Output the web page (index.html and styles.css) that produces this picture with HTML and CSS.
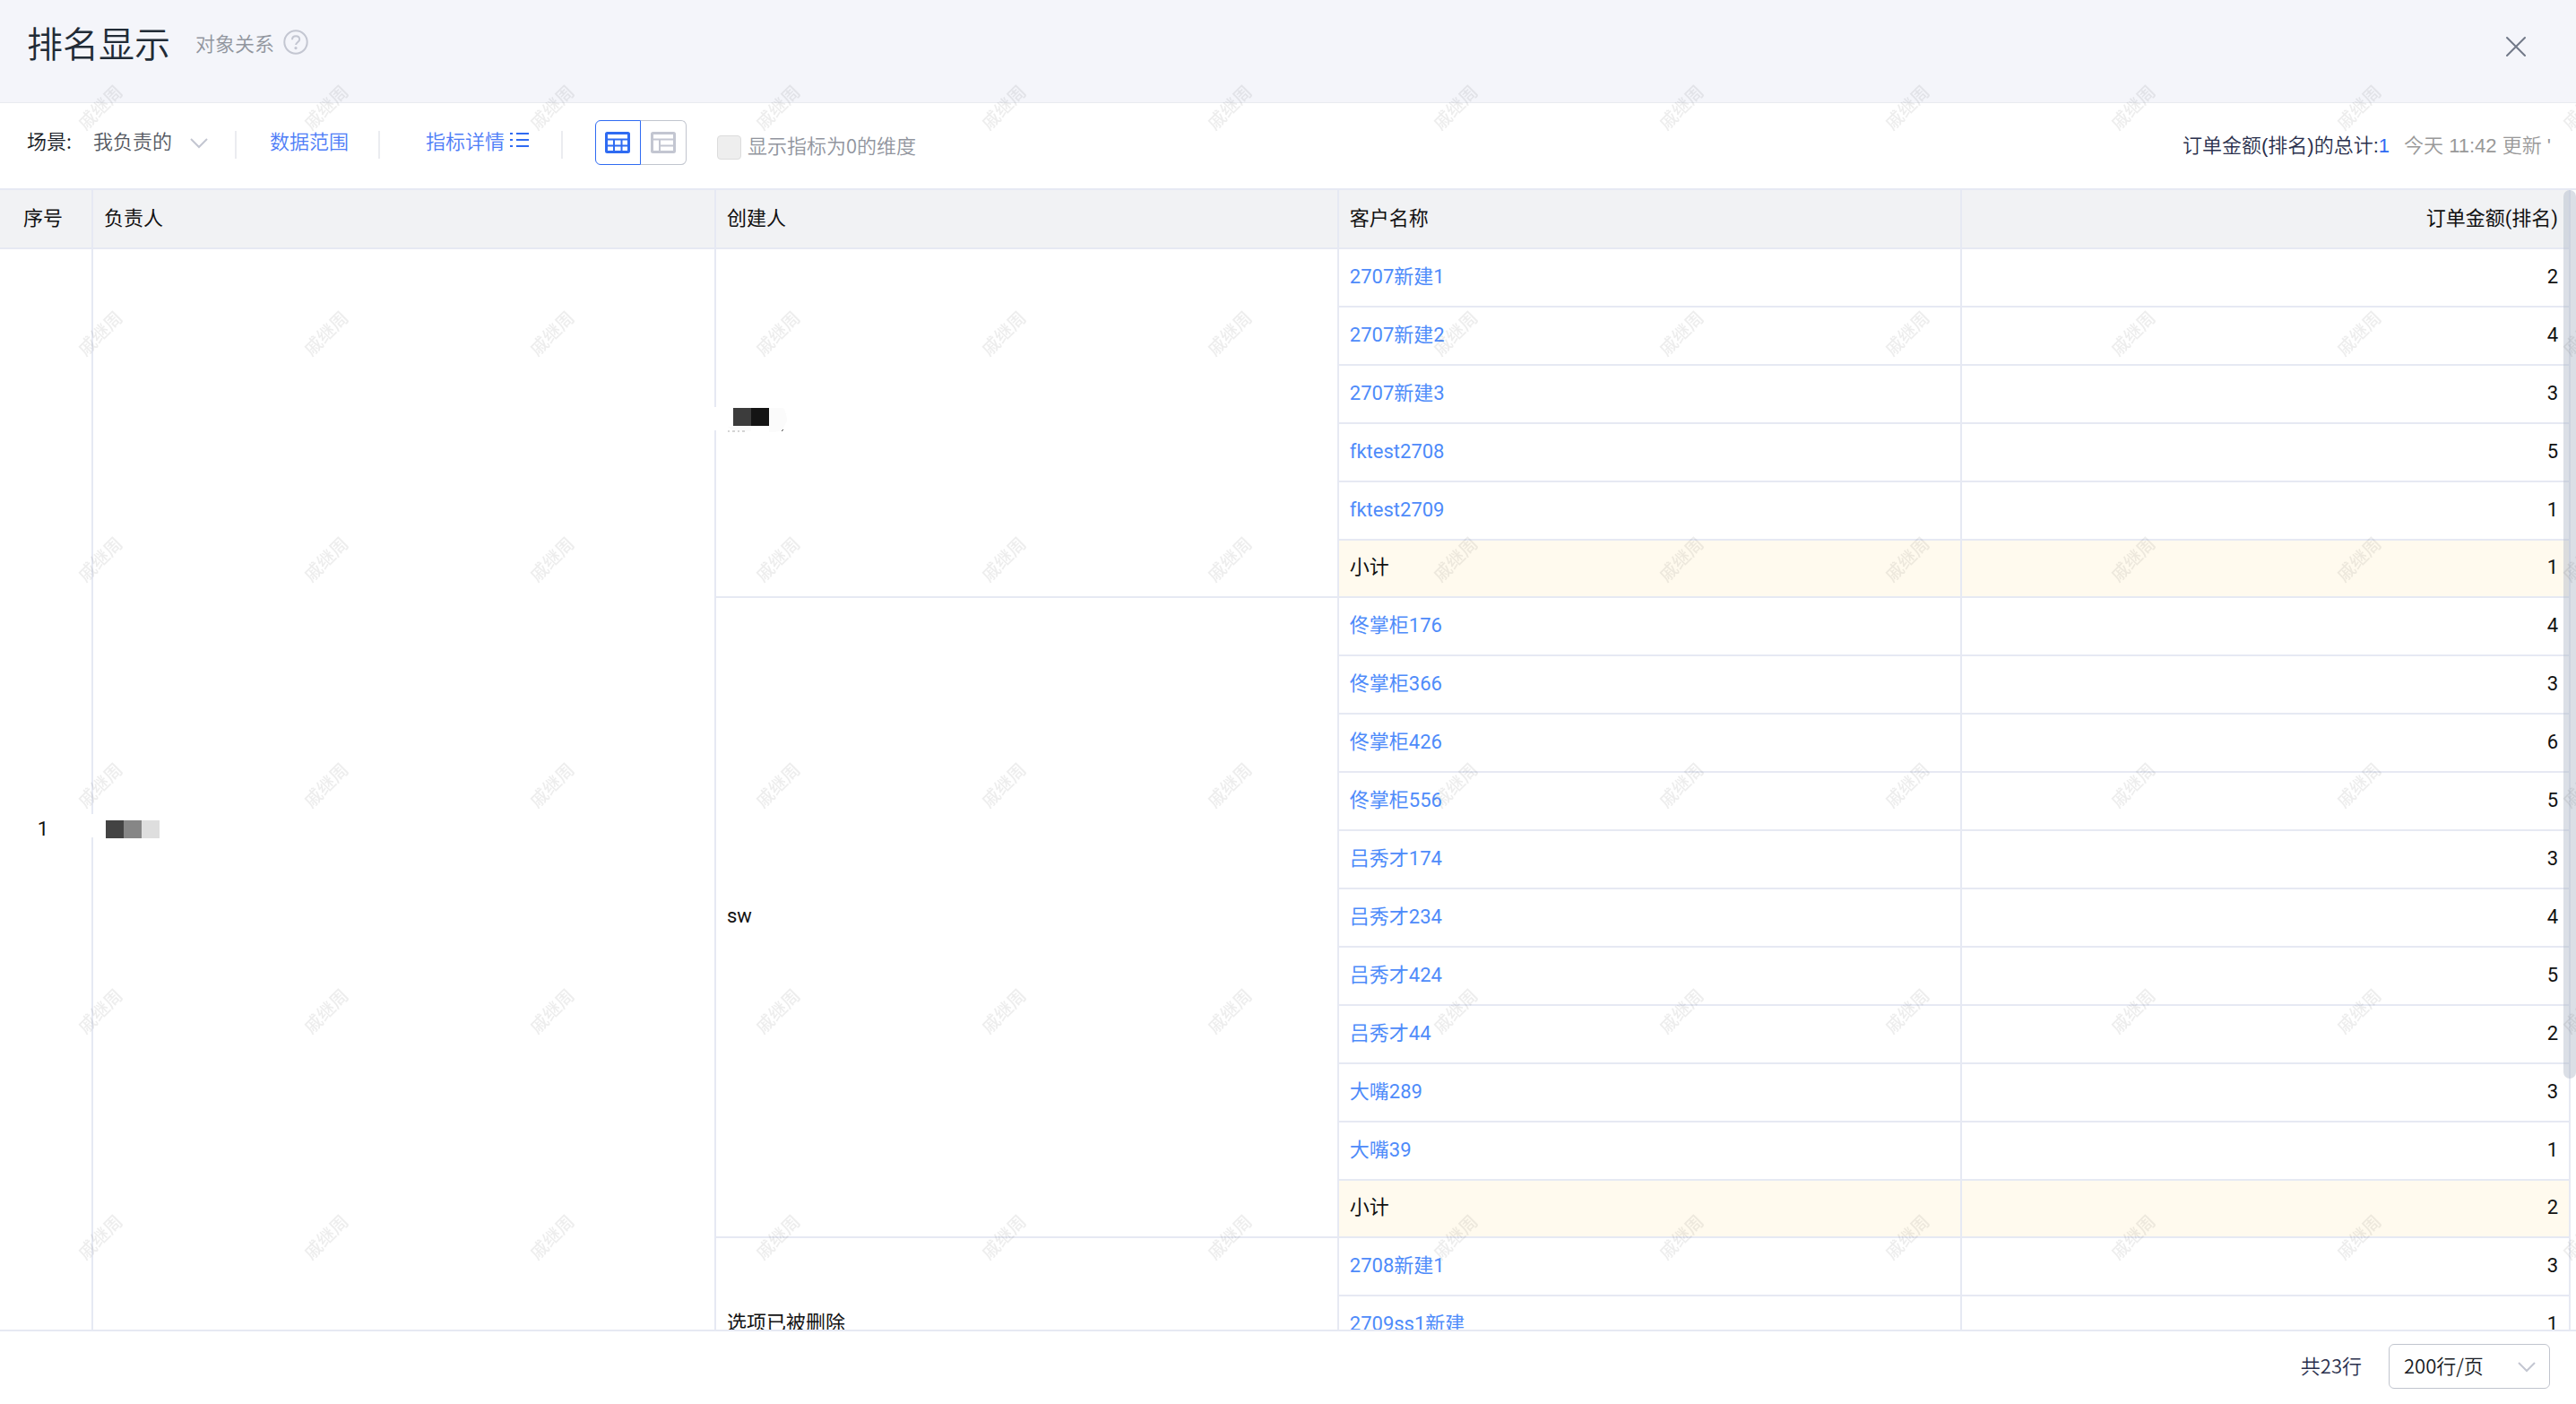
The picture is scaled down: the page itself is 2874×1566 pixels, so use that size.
FILE: index.html
```html
<!DOCTYPE html>
<html lang="zh-CN">
<head>
    <meta charset="UTF-8">
    <meta name="viewport" content="width=device-width, initial-scale=1.0">
    <title>排名显示</title>
    <link rel="stylesheet" href="styles.css">
</head>

<body>
    <div class="page">
        <header class="header">
            <h1>排名显示</h1>
            <span class="subtitle">对象关系</span>
            <button class="icon-button help" type="button" aria-label="帮助">
                <svg width="28" height="28" viewBox="0 0 28 28" fill="none" stroke="#c3c6d1" stroke-width="2">
                    <circle cx="14" cy="14" r="12.7"/>
                    <path d="M10 11.2c0-2.4 1.7-4 4.1-4s4.1 1.5 4.1 3.7c0 2.9-4.1 3.2-4.1 6.2"/>
                    <circle cx="14" cy="20.6" r="1.6" fill="#c3c6d1" stroke="none"/>
                </svg>
            </button>
            <button class="icon-button close" type="button" aria-label="关闭">
                <svg width="24" height="24" viewBox="0 0 24 24" fill="none" stroke="#717988" stroke-width="2" stroke-linecap="round">
                    <path d="M2 2l20 20M22 2L2 22"/>
                </svg>
            </button>
        </header>

        <div class="toolbar">
            <div class="filters">
                <label for="scene">场景:</label>
                <div class="scene-select">
                    <select id="scene">
                        <option>我负责的</option>
                    </select>
                    <svg class="chevron" width="20" height="12" viewBox="0 0 20 12" fill="none" stroke="#c3c6d1" stroke-width="2">
                        <path d="M1 1l9 9 9-9"/>
                    </svg>
                </div>
                <span class="divider"></span>
                <a class="range-link" href="#">数据范围</a>
                <span class="divider"></span>
                <a class="detail-link" href="#">指标详情
                    <svg width="22" height="18" viewBox="0 0 22 18" stroke="#2f6bf2" stroke-width="2">
                        <path d="M0 2h3M0 9h3M0 16h3M7 2h14M7 9h14M7 16h14"/>
                    </svg>
                </a>
                <span class="divider"></span>
                <div class="view-toggle">
                    <button class="active" type="button" aria-label="表格视图">
                        <svg width="28" height="24" viewBox="0 0 28 24" fill="none" stroke="currentColor" stroke-width="2">
                            <rect x="1.5" y="1.5" width="25" height="21" rx="1" stroke-width="3"/>
                            <path d="M1 8.5h26M1 15.5h26M10 8.5v14M18.5 8.5v14"/>
                        </svg>
                    </button>
                    <button type="button" aria-label="列表视图">
                        <svg width="28" height="24" viewBox="0 0 28 24" fill="none" stroke="currentColor" stroke-width="2">
                            <rect x="1.5" y="1.5" width="25" height="21" rx="1" stroke-width="3"/>
                            <path d="M1 8.5h26M10 15.5h17M10 8.5v14"/>
                        </svg>
                    </button>
                </div>
            </div>
            <div class="zero-check">
                <input id="showZero" type="checkbox" disabled>
                <label for="showZero">显示指标为0的维度</label>
            </div>
            <div class="summary">
                <span>订单金额(排名)的总计:<b>1</b></span>
                <span class="updated">今天 11:42 更新 '</span>
            </div>
        </div>

        <main class="table-wrap">
            <table>
                <colgroup>
                    <col class="col-index">
                    <col class="col-data">
                    <col class="col-data">
                    <col class="col-data">
                    <col>
                </colgroup>
                <thead>
                    <tr><th class="index">序号</th><th>负责人</th><th>创建人</th><th>客户名称</th><th class="num">订单金额(排名)</th></tr>
                </thead>
                <tbody>
                    <tr>
                        <td class="index" rowspan="20">1</td>
                        <td class="masked" rowspan="20">
                            <span class="line-mask"></span>
                            <svg width="60" height="20" viewBox="0 0 60 20">
                                <rect width="20" height="20" fill="#434343"/>
                                <rect x="20" width="20" height="20" fill="#868686"/>
                                <rect x="40" width="20" height="20" fill="#dedede"/>
                            </svg>
                        </td>
                        <td class="masked creator" rowspan="6">
                            <span class="line-mask"></span>
                            <svg width="68" height="34" viewBox="0 0 68 34">
                                <path d="M46 7h16q4 6 4 15l-6 10-14 4zM0 28h26v5H8z" fill="#fbfbfb"/>
                                <rect x="6" y="7" width="20" height="20" fill="#3c3c3c"/>
                                <rect x="26" y="7" width="20" height="20" fill="#141414"/>
                                <path d="M0 33h2M5 33h3M11 33h2M16 33h3" stroke="#aaa"/>
                                <path d="M60 33l2-2" stroke="#444"/>
                            </svg>
                        </td>
                        <td><a href="#">2707新建1</a></td><td class="num">2</td>
                    </tr>
                    <tr><td><a href="#">2707新建2</a></td><td class="num">4</td></tr>
                    <tr><td><a href="#">2707新建3</a></td><td class="num">3</td></tr>
                    <tr><td><a href="#">fktest2708</a></td><td class="num">5</td></tr>
                    <tr><td><a href="#">fktest2709</a></td><td class="num">1</td></tr>
                    <tr class="subtotal"><td>小计</td><td class="num">1</td></tr>
                    <tr><td rowspan="11">sw</td><td><a href="#">佟掌柜176</a></td><td class="num">4</td></tr>
                    <tr><td><a href="#">佟掌柜366</a></td><td class="num">3</td></tr>
                    <tr><td><a href="#">佟掌柜426</a></td><td class="num">6</td></tr>
                    <tr><td><a href="#">佟掌柜556</a></td><td class="num">5</td></tr>
                    <tr><td><a href="#">吕秀才174</a></td><td class="num">3</td></tr>
                    <tr><td><a href="#">吕秀才234</a></td><td class="num">4</td></tr>
                    <tr><td><a href="#">吕秀才424</a></td><td class="num">5</td></tr>
                    <tr><td><a href="#">吕秀才44</a></td><td class="num">2</td></tr>
                    <tr><td><a href="#">大嘴289</a></td><td class="num">3</td></tr>
                    <tr><td><a href="#">大嘴39</a></td><td class="num">1</td></tr>
                    <tr class="subtotal"><td>小计</td><td class="num">2</td></tr>
                    <tr><td rowspan="3">选项已被删除</td><td><a href="#">2708新建1</a></td><td class="num">3</td></tr>
                    <tr><td><a href="#">2709ss1新建</a></td><td class="num">1</td></tr>
                    <tr class="subtotal"><td></td><td></td></tr>
                </tbody>
            </table>
            <div class="scrollbar"></div>
        </main>

        <footer class="footer">
            <label for="pageSize">共23行</label>
            <div class="size-select">
                <select id="pageSize">
                    <option>200行/页</option>
                </select>
                <svg class="chevron" width="20" height="12" viewBox="0 0 20 12" fill="none" stroke="#c3c6d1" stroke-width="2">
                    <path d="M1 1l9 9 9-9"/>
                </svg>
            </div>
        </footer>
    </div>

    <svg class="watermark" aria-hidden="true">
        <defs>
            <pattern id="mark" width="252" height="252" patternUnits="userSpaceOnUse">
                <text x="112" y="127" text-anchor="middle" transform="rotate(-45 112 120)">戚继周</text>
            </pattern>
        </defs>
        <rect width="100%" height="100%" fill="url(#mark)"/>
    </svg>
</body>
</html>
```

FILE: styles.css
```css
* {
    box-sizing: border-box;
}

body {
    margin: 0;
    font-family: 'Noto Sans CJK SC', sans-serif;
    font-size: 22px;
    font-weight: 350;
    line-height: 32px;
    color: #181c25;
    background: #fff;
}

a {
    color: #4e8bfa;
    text-decoration: none;
}

button,
select {
    margin: 0;
    padding: 0;
    border: none;
    background: none;
    font: inherit;
    color: inherit;
}

svg {
    display: block;
}

.page {
    display: flex;
    flex-direction: column;
    height: 100vh;
    overflow: hidden;
}

/* Header */
.header {
    flex: none;
    display: flex;
    align-items: center;
    height: 115px;
    padding: 0 55px 20px 30px;
    background: #f4f5fa;
    border-bottom: 1px solid #e9ebf0;
}

.header h1 {
    margin: 0 28px 0 0;
    font-size: 40px;
    font-weight: 350;
    line-height: 56px;
    color: #212b36;
}

.subtitle {
    color: #91959e;
}

.help {
    margin-left: 10px;
}

.close {
    margin: 10px 0 0 auto;
}

/* Toolbar */
.toolbar {
    flex: none;
    display: flex;
    align-items: center;
    height: 95px;
    padding: 0 28px 0 30px;
}

.filters {
    display: flex;
    align-items: center;
    padding-bottom: 8px;
}

.filters label,
.filters select,
.range-link,
.detail-link {
    padding-bottom: 6px;
}

.scene-select {
    position: relative;
    width: 128px;
    margin: 0 30px 0 24px;
    color: #545861;
}

.scene-select select {
    display: block;
    width: 100%;
    height: 38px;
    appearance: none;
}

.chevron {
    position: absolute;
    top: 50%;
    right: 0;
    margin-top: -5px;
    pointer-events: none;
}

.divider {
    width: 2px;
    height: 31px;
    margin-top: 5px;
    background: #ebecf0;
}

.range-link,
.detail-link {
    color: #4d7cf7;
}

.range-link {
    margin: 0 33px 0 37px;
}

.detail-link {
    display: flex;
    align-items: center;
    gap: 6px;
    margin: 0 35px 0 51px;
}

.view-toggle {
    display: flex;
    margin-left: 36px;
}

.view-toggle button {
    display: flex;
    align-items: center;
    justify-content: center;
    width: 51px;
    height: 50px;
    border: 1px solid #c1c5ce;
    border-left: none;
    border-radius: 0 6px 6px 0;
    color: #c3c6d1;
}

.view-toggle .active {
    border: 1px solid #2f6bf2;
    border-radius: 6px 0 0 6px;
    color: #2f6bf2;
}

.zero-check {
    display: flex;
    align-items: center;
    gap: 7px;
    margin-left: 34px;
    color: #91959e;
}

.zero-check label {
    padding-bottom: 3px;
}

.zero-check input {
    width: 27px;
    height: 27px;
    margin: 3px 0 0;
    appearance: none;
    background: #eee;
    border: 1px solid #dcdcdc;
    border-radius: 4px;
}

.summary {
    display: flex;
    gap: 16px;
    margin-left: auto;
    font-family: 'Liberation Sans', 'Noto Sans CJK SC', sans-serif;
    color: #2a304d;
}

.summary b {
    font-weight: 400;
    color: #2f6bf2;
}

.updated {
    color: #999;
}

/* Table */
.table-wrap {
    position: relative;
    flex: 1;
    min-height: 0;
    padding-right: 6px;
    overflow: hidden;
    border-top: 2px solid #e6e9f3;
    border-bottom: 2px solid #e6e9f3;
}

table {
    width: 100%;
    table-layout: fixed;
    border-collapse: separate;
    border-spacing: 0;
    font-family: Roboto, 'Noto Sans CJK SC', sans-serif;
    color: #111;
}

.col-index {
    width: 104px;
}

.col-data {
    width: 24.23%;
}

th,
td {
    height: 65px;
    padding: 0 12px 2px;
    border-right: 2px solid #e6e9f3;
    border-bottom: 2px solid #e6e9f3;
    text-align: left;
    font-weight: 400;
    vertical-align: middle;
}

th {
    height: 66px;
    padding-bottom: 0;
    background: #f1f2f4;
}

.index {
    padding-left: 0;
    padding-right: 6px;
    text-align: center;
}

.num {
    text-align: right;
}

.subtotal td {
    height: 64px;
    background: #fffaee;
}

.masked {
    position: relative;
    padding-left: 14px;
}

.creator {
    padding: 0 0 14px 13px;
}

/* Hides the column line next to a masked name */
.line-mask {
    position: absolute;
    top: 50%;
    left: -2px;
    width: 2px;
    height: 26px;
    margin-top: -18px;
    background: #fff;
}

.scrollbar {
    position: absolute;
    top: 0;
    right: 0;
    width: 14px;
    height: 78%;
    border-radius: 7px;
    background: rgba(175, 183, 200, 0.45);
}

/* Footer */
.footer {
    flex: none;
    display: flex;
    align-items: center;
    justify-content: flex-end;
    gap: 30px;
    height: 81px;
    padding: 0 29px 4px 0;
    color: #2a304d;
}

.footer label {
    padding-bottom: 4px;
}

.size-select {
    position: relative;
    width: 180px;
    color: #181c25;
}

.size-select select {
    display: block;
    width: 100%;
    height: 50px;
    padding: 0 0 4px 16px;
    border: 1px solid #c1c5ce;
    border-radius: 6px;
    appearance: none;
}

.size-select .chevron {
    right: 16px;
}

/* Watermark */
.watermark {
    position: fixed;
    top: 0;
    left: 0;
    width: 100%;
    height: 100%;
    pointer-events: none;
}

.watermark text {
    font-size: 20px;
    font-weight: 500;
    fill: rgba(0, 0, 0, 0.07);
}
```
